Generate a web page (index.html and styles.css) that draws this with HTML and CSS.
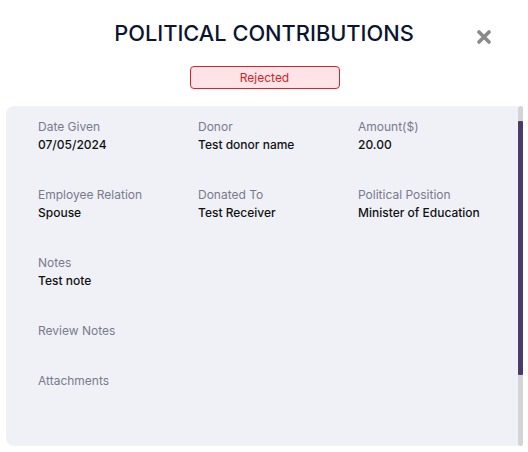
FILE: index.html
```html
<!DOCTYPE html>
<html>
<head>
<meta charset="utf-8">
<link rel="stylesheet" href="styles.css">
</head>
<body>
<div class="modal">
  <div class="header">
    <h1 class="title">POLITICAL CONTRIBUTIONS</h1>
    <button class="close" aria-label="Close">
      <svg width="14" height="14" viewBox="0 0 14 14"><path d="M2 2 L12 12 M12 2 L2 12" stroke="#8a8a8a" stroke-width="3.6" stroke-linecap="round"/></svg>
    </button>
  </div>
  <div class="status-row">
    <span class="badge">Rejected</span>
  </div>
  <div class="panel-wrap">
    <div class="panel">
      <div class="grid">
        <div class="field"><div class="label">Date Given</div><div class="value">07/05/2024</div></div>
        <div class="field"><div class="label">Donor</div><div class="value">Test donor name</div></div>
        <div class="field"><div class="label">Amount($)</div><div class="value">20.00</div></div>
        <div class="field"><div class="label">Employee Relation</div><div class="value">Spouse</div></div>
        <div class="field"><div class="label">Donated To</div><div class="value">Test Receiver</div></div>
        <div class="field"><div class="label">Political Position</div><div class="value">Minister of Education</div></div>
      </div>
      <div class="field notes"><div class="label">Notes</div><div class="value">Test note</div></div>
      <div class="field short"><div class="label">Review Notes</div></div>
      <div class="field short"><div class="label">Attachments</div></div>
    </div>
    <div class="scrollbar"><div class="thumb"></div></div>
  </div>
</div>
</body>
</html>
```
FILE: styles.css
```css
* { box-sizing: border-box; }
html, body { margin: 0; padding: 0; background: #ffffff; }
body { font-family: Inter, "Noto Sans", sans-serif; width: 528px; height: 452px; overflow: hidden; }
.modal { display: flex; flex-direction: column; }
.header { position: relative; display: flex; justify-content: center; padding-top: 19px; height: 56px; }
.title { margin: 0; font-size: 21.8px; font-weight: 500; color: #0c1530; line-height: 28px; letter-spacing: 0; }
.close { position: absolute; left: 477px; top: 30px; width: 14px; height: 14px; padding: 0; border: 0; background: none; display: flex; }
.status-row { display: flex; justify-content: center; padding-left: 1px; height: 50px; padding-top: 10px; }
.badge { width: 150px; height: 23px; border: 1px solid #d5232f; border-radius: 4px; background: #ffe4e7; color: #d21f2c; font-size: 12px; display: flex; align-items: center; justify-content: center; }
.panel-wrap { display: flex; margin-left: 6px; width: 517px; height: 340px; }
.panel { flex: 1; background: #f0f1f7; border-radius: 8px 0 0 8px; padding: 13px 0 0 32px; }
.grid { display: grid; grid-template-columns: 160px 160px 160px; row-gap: 33px; }
.label { font-size: 12px; color: #787a8c; line-height: 16px; }
.value { font-size: 12px; font-weight: 500; color: #111111; line-height: 18px; margin-top: 1px; }
.notes { margin-top: 33px; }
.short { margin-top: 33px; }
.short + .short { margin-top: 34px; }
.scrollbar { width: 6px; background: #d4d4d8; border-radius: 3px; padding-top: 15px; }
.thumb { height: 254px; background: #4a3b6b; border-radius: 1px; }
```
